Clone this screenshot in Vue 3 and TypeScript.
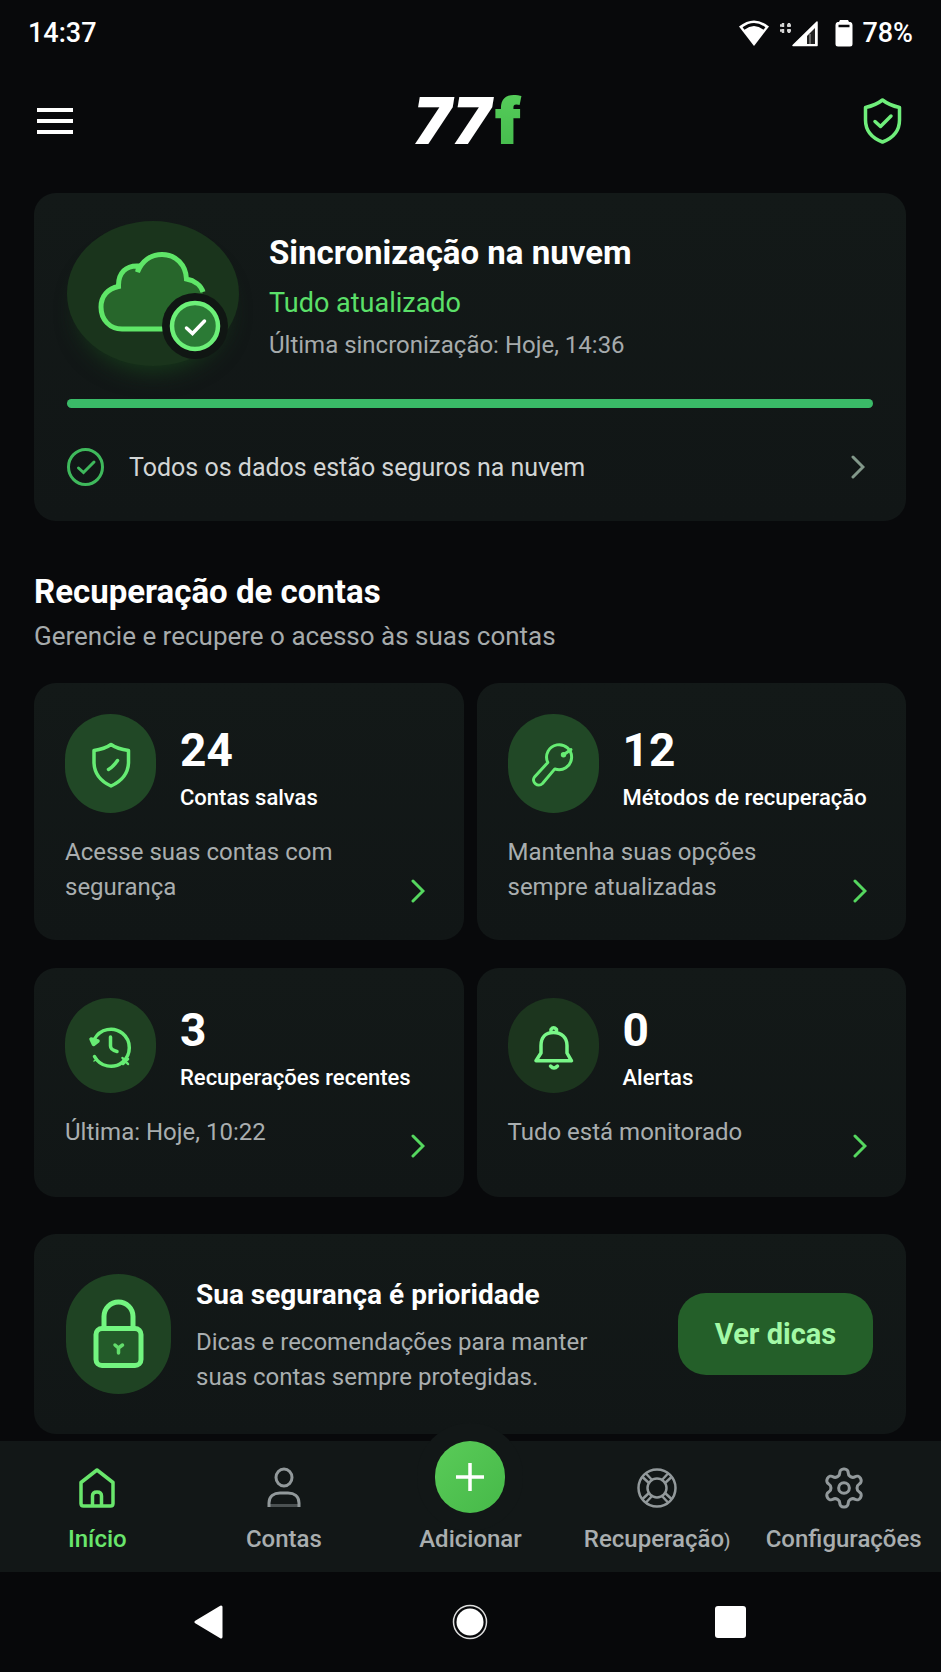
<script setup lang="ts">
type MetricIcon = 'shield' | 'key' | 'history' | 'bell'
type TabIcon = 'home' | 'user' | 'add' | 'buoy' | 'gear'

interface Metric {
  icon: MetricIcon
  value: number
  label: string
  text: string
  tall: boolean
}

interface Tab {
  icon: TabIcon
  label: string
  mark?: string
}

const progress = 100

const metrics: Metric[] = [
  { icon: 'shield', value: 24, label: 'Contas salvas', text: 'Acesse suas contas com segurança', tall: true },
  { icon: 'key', value: 12, label: 'Métodos de recuperação', text: 'Mantenha suas opções sempre atualizadas', tall: true },
  { icon: 'history', value: 3, label: 'Recuperações recentes', text: 'Última: Hoje, 10:22', tall: false },
  { icon: 'bell', value: 0, label: 'Alertas', text: 'Tudo está monitorado', tall: false },
]

const tabs: Tab[] = [
  { icon: 'home', label: 'Início' },
  { icon: 'user', label: 'Contas' },
  { icon: 'add', label: 'Adicionar' },
  { icon: 'buoy', label: 'Recuperação', mark: ')' },
  { icon: 'gear', label: 'Configurações' },
]
</script>

<template>
  <div class="app">
    <div class="status">
      <span>14:37</span>
      <div class="status-right">
        <svg width="32" height="28" viewBox="0 0 32 28" aria-hidden="true">
          <path d="M1 7.5Q16-4.500 31 7.500L16 27Z" fill="#fff" />
          <path d="M5.500 9.500Q16 1.500 26.500 9.500" fill="none" stroke="#08090b" stroke-width="3" />
        </svg>
        <svg class="signal" width="38" height="28" viewBox="0 0 38 28" aria-hidden="true">
          <path d="M3 4v10M9 4v10M0 6.500h4.500M7 6.500h5M0 11.500h4.500M7 11.500h5" stroke="#d5d5d5" stroke-width="2.400" stroke-dasharray="4 2" />
          <path d="M13 26.500L37 3V26.500Z" fill="#fff" stroke="#fff" stroke-width="1.500" stroke-linejoin="round" />
          <path d="M27 17L35 9V25H27Z" fill="#222" />
          <path d="M30 15v10" stroke="#666" stroke-width="2" />
        </svg>
        <svg class="battery" width="18" height="28" viewBox="0 0 18 28" aria-hidden="true">
          <path d="M5 1H13L14 3H15.500Q17.500 3.500 17.500 6V25Q17.500 27.500 15 27.500H3Q.5 27.500 .5 25V6Q.5 3.500 2.500 3H4Z" fill="#fff" />
          <path d="M3.500 7H14.500" stroke="#08090b" stroke-width="2.500" />
        </svg>
        <span>78%</span>
      </div>
    </div>

    <header class="header">
      <button class="icon-button" type="button" aria-label="Menu">
        <svg width="36" height="28" viewBox="0 0 36 28" aria-hidden="true">
          <path d="M0 3H36M0 14H36M0 25H36" stroke="#fff" stroke-width="4" />
        </svg>
      </button>
      <h1 class="logo">77<span>f</span></h1>
      <button class="icon-button" type="button" aria-label="Segurança">
        <svg width="41" height="48" viewBox="0 0 41 48" fill="none" stroke="#6fee7b" stroke-width="3.500" stroke-linecap="round" stroke-linejoin="round" aria-hidden="true">
          <path d="M20.500 3C16 6.500 10 9 3.500 10.500V23C3.500 34 10 41 20.500 45C31 41 37.500 34 37.500 23V10.500C31 9 25 6.500 20.500 3Z" />
          <path d="M13 24.500L18.500 29.500L29 19" />
        </svg>
      </button>
    </header>

    <main class="main">
      <section class="card sync">
        <div class="sync-head">
          <div class="cloud">
            <svg width="172" height="145" viewBox="0 0 172 145" fill="none" aria-hidden="true">
              <path d="M96 108H55C43 108 34 99 34 86C34 75 41 67.500 51.500 65.500C51 52 59 44 72 45L70.500 51C75 40 84 33.500 95 33.500C109 33.500 119 44 119.500 58C127 59.500 134 64 136 71L128 105Z" fill="#27662b" />
              <path d="M98 108H55C43 108 34 99 34 86C34 75 41 67.500 51.500 65.500C51 52 59 44 72 45L70.500 51C75 40 84 33.500 95 33.500C109 33.500 119 44 119.500 58C127 59.500 134 64 136 71" stroke="#5fe668" stroke-width="5" />
              <circle cx="128" cy="105" r="33" fill="#101613" />
              <circle cx="128" cy="105" r="23" fill="#2b7a35" stroke="#6cf078" stroke-width="4.500" />
              <path d="M119.500 107L125.500 112.500L137.500 100" stroke="#fff" stroke-width="3.500" stroke-linecap="round" />
            </svg>
          </div>
          <div class="sync-text">
            <h2>Sincronização na nuvem</h2>
            <p class="sync-state">Tudo atualizado</p>
            <p class="sync-time">Última sincronização: Hoje, 14:36</p>
          </div>
        </div>
        <div class="track" role="progressbar" aria-label="Sincronização" :aria-valuenow="progress" aria-valuemin="0" aria-valuemax="100">
          <div class="bar" :style="{ width: progress + '%' }"></div>
        </div>
        <a class="sync-link" href="#nuvem">
          <svg width="38" height="40" viewBox="0 0 38 40" fill="none" stroke="#3fb95c" stroke-width="3" stroke-linecap="round" aria-hidden="true">
            <ellipse cx="18.500" cy="20" rx="17" ry="17.500" />
            <path d="M11.500 21L16.500 25.500L27 15" />
          </svg>
          <span>Todos os dados estão seguros na nuvem</span>
          <svg class="sync-chevron" width="14" height="24" viewBox="0 0 14 24" fill="none" stroke="#82988a" stroke-width="3" stroke-linecap="round" aria-hidden="true">
            <path d="M2 2L12 12L2 22" />
          </svg>
        </a>
      </section>

      <section class="accounts">
        <h2>Recuperação de contas</h2>
        <p class="lead">Gerencie e recupere o acesso às suas contas</p>
        <div class="grid">
          <a v-for="m in metrics" :key="m.label" href="#contas" class="card metric" :class="{ tall: m.tall }">
            <div class="metric-head">
              <div class="bubble" :class="m.icon">
                <svg width="48" height="48" viewBox="0 0 48 48" fill="none" stroke="#66ec73" stroke-width="3.500" stroke-linecap="round" stroke-linejoin="round" aria-hidden="true">
                  <template v-if="m.icon === 'shield'">
                    <path d="M24 4.500C19 8 14 9.500 7 10.500V23C7.500 34 13 41 24 46C35 41 41 34 41.500 23V10.500C34 9.500 29 8 24 4.500Z" />
                    <path d="M21.500 29.500Q26 27 30.500 20.500" />
                  </template>
                  <template v-else-if="m.icon === 'key'">
                    <g stroke-width="3">
                      <path d="M18.800 22.500L5.500 37C2 42 9 48 13.500 43.500L25.800 28.900A12.500 12.500 0 1 0 18.800 22.500Z" />
                      <path d="M35 14.500L42 9.500" />
                      <circle cx="34.500" cy="14.800" r="1.200" fill="#66ec73" />
                    </g>
                  </template>
                  <template v-else-if="m.icon === 'history'">
                    <path d="M7.500 17A18.500 18.500 0 1 1 7.500 34.500" />
                    <path d="M4 17L11 19L6.500 22.500Z" fill="#66ec73" />
                    <path d="M23.500 15V24Q23.500 28 30 29.500" />
                    <path d="M35.500 36L41 42M36 42L41 37" stroke-width="2.500" />
                    <path d="M7 39L10 37" stroke-width="1.500" />
                  </template>
                  <template v-else>
                    <g stroke="#79f788">
                      <path d="M7 38.800L12 31V23.500C12 15.500 16.500 10.500 24.500 10.500S38 15.500 38 23.500V31L42.500 38.800Z" />
                      <path d="M22 9V7.500Q24.500 4 27.500 7.500V9" />
                      <path d="M21.500 44Q25 48 28.500 44" />
                    </g>
                  </template>
                </svg>
              </div>
              <div class="metric-text">
                <strong>{{ m.value }}</strong>
                <span>{{ m.label }}</span>
              </div>
            </div>
            <div class="metric-foot">
              <p>{{ m.text }}</p>
              <svg width="14" height="24" viewBox="0 0 14 24" fill="none" stroke="#55d75f" stroke-width="3" stroke-linecap="round" aria-hidden="true">
                <path d="M2 2L12 12L2 22" />
              </svg>
            </div>
          </a>
        </div>
      </section>

      <section class="card tips">
        <div class="lock">
          <svg width="105" height="120" viewBox="0 0 105 120" fill="none" stroke="#73f580" stroke-width="5" aria-hidden="true">
            <path d="M38 54V42.500A14.500 14.500 0 0 1 67 42.500V54" />
            <rect x="30" y="54.500" width="45" height="37" rx="6" fill="#235b29" />
            <path d="M49 71L52.500 74L56.500 71M52.500 74V79" stroke="#62dd6b" stroke-width="3.500" stroke-linecap="round" />
          </svg>
        </div>
        <div class="tips-text">
          <h2>Sua segurança é prioridade</h2>
          <p>Dicas e recomendações para manter suas contas sempre protegidas.</p>
        </div>
        <button class="tips-button" type="button">Ver dicas</button>
      </section>
    </main>

    <nav class="tabs" aria-label="Principal">
      <a v-for="t in tabs" :key="t.label" href="#aba" class="tab" :class="{ active: t.icon === 'home' }">
        <span v-if="t.icon === 'add'" class="fab">
          <svg width="28" height="30" viewBox="0 0 28 30" stroke="#fff" stroke-width="3.500" aria-hidden="true">
            <path d="M14 1V29M0 15H28" />
          </svg>
        </span>
        <svg v-else-if="t.icon === 'home'" width="40" height="42" viewBox="0 0 40 42" fill="none" stroke="currentColor" stroke-width="3.500" stroke-linejoin="round" aria-hidden="true">
          <path d="M20 3L36 15.500V36.500Q36 39 33.500 39H6.500Q4 39 4 36.500V15.500Z" />
          <path d="M15.500 39V29Q15.500 25 20 25T24.500 29V39" />
        </svg>
        <svg v-else-if="t.icon === 'user'" width="40" height="42" viewBox="0 0 40 42" fill="none" stroke="currentColor" stroke-width="3" aria-hidden="true">
          <ellipse cx="20" cy="10.500" rx="8" ry="8.500" />
          <path d="M5 40V36C5 29 10 26 16 26H24C30 26 35 29 35 36V40" />
          <path d="M6 38.500H34" stroke-opacity=".45" />
        </svg>
        <svg v-else-if="t.icon === 'buoy'" width="40" height="42" viewBox="0 0 40 42" fill="none" stroke="currentColor" stroke-width="2.500" aria-hidden="true">
          <circle cx="20" cy="21" r="18.500" />
          <circle cx="20" cy="21" r="9.500" />
          <path d="M9 6.500L15.500 13.500M5.500 10L12.500 16.500M31 6.500L24.500 13.500M34.500 10L27.500 16.500M9 35.500L15.500 28.500M5.500 32L12.500 25.500M31 35.500L24.500 28.500M34.500 32L27.500 25.500" />
        </svg>
        <svg v-else width="42" height="42" viewBox="1 1 22 22" fill="none" stroke="currentColor" stroke-width="1.600" aria-hidden="true">
          <path d="M12.220 2h-.44a2 2 0 0 0-2 2v.18a2 2 0 0 1-1 1.730l-.43.25a2 2 0 0 1-2 0l-.15-.08a2 2 0 0 0-2.730.73l-.22.38a2 2 0 0 0 .73 2.730l.15.1a2 2 0 0 1 1 1.720v.51a2 2 0 0 1-1 1.740l-.15.09a2 2 0 0 0-.73 2.730l.22.38a2 2 0 0 0 2.730.73l.15-.08a2 2 0 0 1 2 0l.43.25a2 2 0 0 1 1 1.730V20a2 2 0 0 0 2 2h.44a2 2 0 0 0 2-2v-.18a2 2 0 0 1 1-1.730l.43-.25a2 2 0 0 1 2 0l.15.08a2 2 0 0 0 2.730-.73l.22-.39a2 2 0 0 0-.73-2.730l-.15-.08a2 2 0 0 1-1-1.740v-.5a2 2 0 0 1 1-1.740l.15-.09a2 2 0 0 0 .73-2.730l-.22-.38a2 2 0 0 0-2.730-.73l-.15.08a2 2 0 0 1-2 0l-.43-.25a2 2 0 0 1-1-1.730V4a2 2 0 0 0-2-2z" />
          <circle cx="12" cy="12" r="2.800" />
        </svg>
        <span class="tab-label">{{ t.label }}<small v-if="t.mark">{{ t.mark }}</small></span>
      </a>
    </nav>

    <div class="system">
      <button type="button" aria-label="Voltar">
        <svg width="34" height="34" viewBox="0 0 34 34" aria-hidden="true">
          <path d="M4 17L29 2V32Z" fill="#fff" stroke="#fff" stroke-width="3" stroke-linejoin="round" />
        </svg>
      </button>
      <button type="button" aria-label="Tela inicial">
        <svg width="36" height="36" viewBox="0 0 36 36" aria-hidden="true">
          <circle cx="18" cy="18" r="13.500" fill="#fff" />
          <circle cx="18" cy="18" r="16.500" fill="none" stroke="#ddd" stroke-width="1.500" />
        </svg>
      </button>
      <button type="button" aria-label="Aplicativos recentes">
        <svg width="34" height="34" viewBox="0 0 34 34" aria-hidden="true">
          <rect x="0" y="1" width="31" height="32" rx="3" fill="#fff" />
        </svg>
      </button>
    </div>
  </div>
</template>

<style>
body {
  margin: 0;
  background: #08090b;
}
</style>

<style scoped>
.app {
  display: flex;
  flex-direction: column;
  min-height: 100vh;
  background: #08090b;
  color: #fff;
  font-family: Roboto, "Liberation Sans", sans-serif;
}

h1,
h2,
p {
  margin: 0;
}

a {
  color: inherit;
  text-decoration: none;
}

button {
  padding: 0;
  border: 0;
  background: none;
  color: inherit;
  font: inherit;
  cursor: pointer;
}

svg {
  display: block;
  flex: none;
}

.status {
  display: flex;
  align-items: center;
  justify-content: space-between;
  height: 66px;
  padding: 0 28px;
  font-size: 27px;
  font-weight: 500;
}

.status-right {
  display: flex;
  align-items: center;
}

.signal {
  margin-left: 10px;
}

.battery {
  margin: 0 9px 0 17px;
}

.header {
  display: flex;
  align-items: center;
  justify-content: space-between;
  height: 110px;
  padding: 0 38px 0 37px;
}

.icon-button {
  display: flex;
}

.logo {
  font-family: Inter, Roboto, sans-serif;
  font-size: 64px;
  font-weight: 900;
  font-style: italic;
  line-height: 70px;
}

.logo span {
  margin-left: 4px;
  background: linear-gradient(#58d05c, #43b94b);
  background-clip: text;
  color: transparent;
  font-style: normal;
}

.main {
  display: flex;
  flex: 1;
  flex-direction: column;
  padding: 17px 35px 7px 34px;
}

.card {
  border-radius: 22px;
  background: linear-gradient(#131918, #111616);
}

.sync {
  padding: 28px 33px 34px;
}

.sync-head {
  display: flex;
  gap: 30px;
}

.cloud {
  flex: none;
  border-radius: 50%;
  background: #1a341c;
  box-shadow: 0 18px 24px -14px #173d1b;
}

.sync-text {
  padding-top: 12px;
}

.sync h2,
.accounts h2 {
  font-size: 33px;
  font-weight: 700;
  line-height: 40px;
}

.sync-state {
  margin-top: 12px;
  color: #5be069;
  font-size: 27px;
  line-height: 36px;
}

.sync-time {
  margin-top: 8px;
  color: #a6abac;
  font-size: 24px;
  line-height: 32px;
}

.track {
  height: 9px;
  margin-top: 33px;
  border-radius: 5px;
  background: #233029;
}

.bar {
  height: 100%;
  border-radius: 5px;
  background: #3abb68;
}

.sync-link {
  display: flex;
  align-items: center;
  margin-top: 39px;
  color: #d2d5d5;
  font-size: 25px;
}

.sync-link span {
  flex: 1;
  margin-left: 24px;
}

.sync-chevron {
  margin-right: 8px;
}

.accounts {
  margin-top: 51px;
}

.lead {
  margin-top: 8px;
  color: #a6abac;
  font-size: 26px;
  line-height: 32px;
}

.grid {
  display: grid;
  grid-template-columns: repeat(2, minmax(0, 1fr));
  gap: 28px 13px;
  margin-top: 31px;
}

.metric {
  display: flex;
  flex-direction: column;
  box-sizing: border-box;
  min-height: 229px;
  padding: 30px 39px 37px 31px;
}

.tall {
  padding: 31px 39px 35px 31px;
}

.metric-head {
  display: flex;
  align-items: flex-end;
  gap: 24px;
}

.bubble {
  display: flex;
  flex: none;
  align-items: center;
  justify-content: center;
  width: 91px;
  height: 95px;
  border-radius: 46px;
  background: #1f3f22;
}

.tall .bubble {
  height: 99px;
  background: #214826;
}

.bubble.bell {
  background: #1c351e;
}

.metric-text {
  padding-bottom: 1px;
  white-space: nowrap;
}

.metric-text strong {
  display: block;
  font-size: 46px;
  font-weight: 700;
  line-height: 46px;
}

.metric-text span {
  display: block;
  margin-top: 11px;
  font-size: 22px;
  font-weight: 500;
  line-height: 28px;
}

.metric-foot {
  display: flex;
  flex: 1;
  margin-top: 22px;
}

.metric-foot p {
  flex: 1;
  padding-right: 40px;
  color: #a9aeaf;
  font-size: 24px;
  line-height: 35px;
}

.metric-foot svg {
  align-self: flex-end;
  margin-bottom: 2px;
}

.tips {
  display: flex;
  align-items: center;
  box-sizing: border-box;
  min-height: 200px;
  margin-top: 37px;
  padding: 0 33px 0 32px;
}

.lock {
  flex: none;
  border-radius: 53px;
  background: #1f4323;
}

.tips-text {
  flex: 1;
  margin-left: 25px;
  padding-top: 4px;
}

.tips h2 {
  font-size: 28px;
  font-weight: 700;
  line-height: 34px;
}

.tips p {
  max-width: 410px;
  margin-top: 13px;
  color: #a9aeaf;
  font-size: 24px;
  line-height: 35px;
}

.tips-button {
  width: 195px;
  height: 82px;
  border-radius: 28px;
  background: #245f29;
  color: #a3f9a6;
  font-size: 29px;
  font-weight: 700;
}

.tabs {
  display: grid;
  grid-template-columns: repeat(5, minmax(0, 1fr));
  padding: 0 4px 18px;
  background: #121717;
}

.tab {
  display: flex;
  flex-direction: column;
  align-items: center;
  justify-content: flex-end;
  gap: 15px;
  height: 113px;
  color: #92999b;
}

.tab-label {
  color: #a9aeaf;
  font-size: 24px;
  font-weight: 500;
  line-height: 30px;
  white-space: nowrap;
}

.tab-label small {
  font-size: 18px;
  line-height: 18px;
}

.active,
.active .tab-label {
  color: #69e66c;
}

.fab {
  display: flex;
  align-items: center;
  justify-content: center;
  width: 70px;
  height: 72px;
  margin-bottom: -4px;
  border-radius: 36px;
  background: linear-gradient(135deg, #5acb58, #46b949);
  box-shadow: 0 0 0 18px #121717;
}

.system {
  display: grid;
  grid-template-columns: repeat(3, minmax(0, 1fr));
  justify-items: center;
  align-items: center;
  height: 100px;
  padding: 0 78px;
  background: #07080a;
}

.system button {
  display: flex;
}
</style>
